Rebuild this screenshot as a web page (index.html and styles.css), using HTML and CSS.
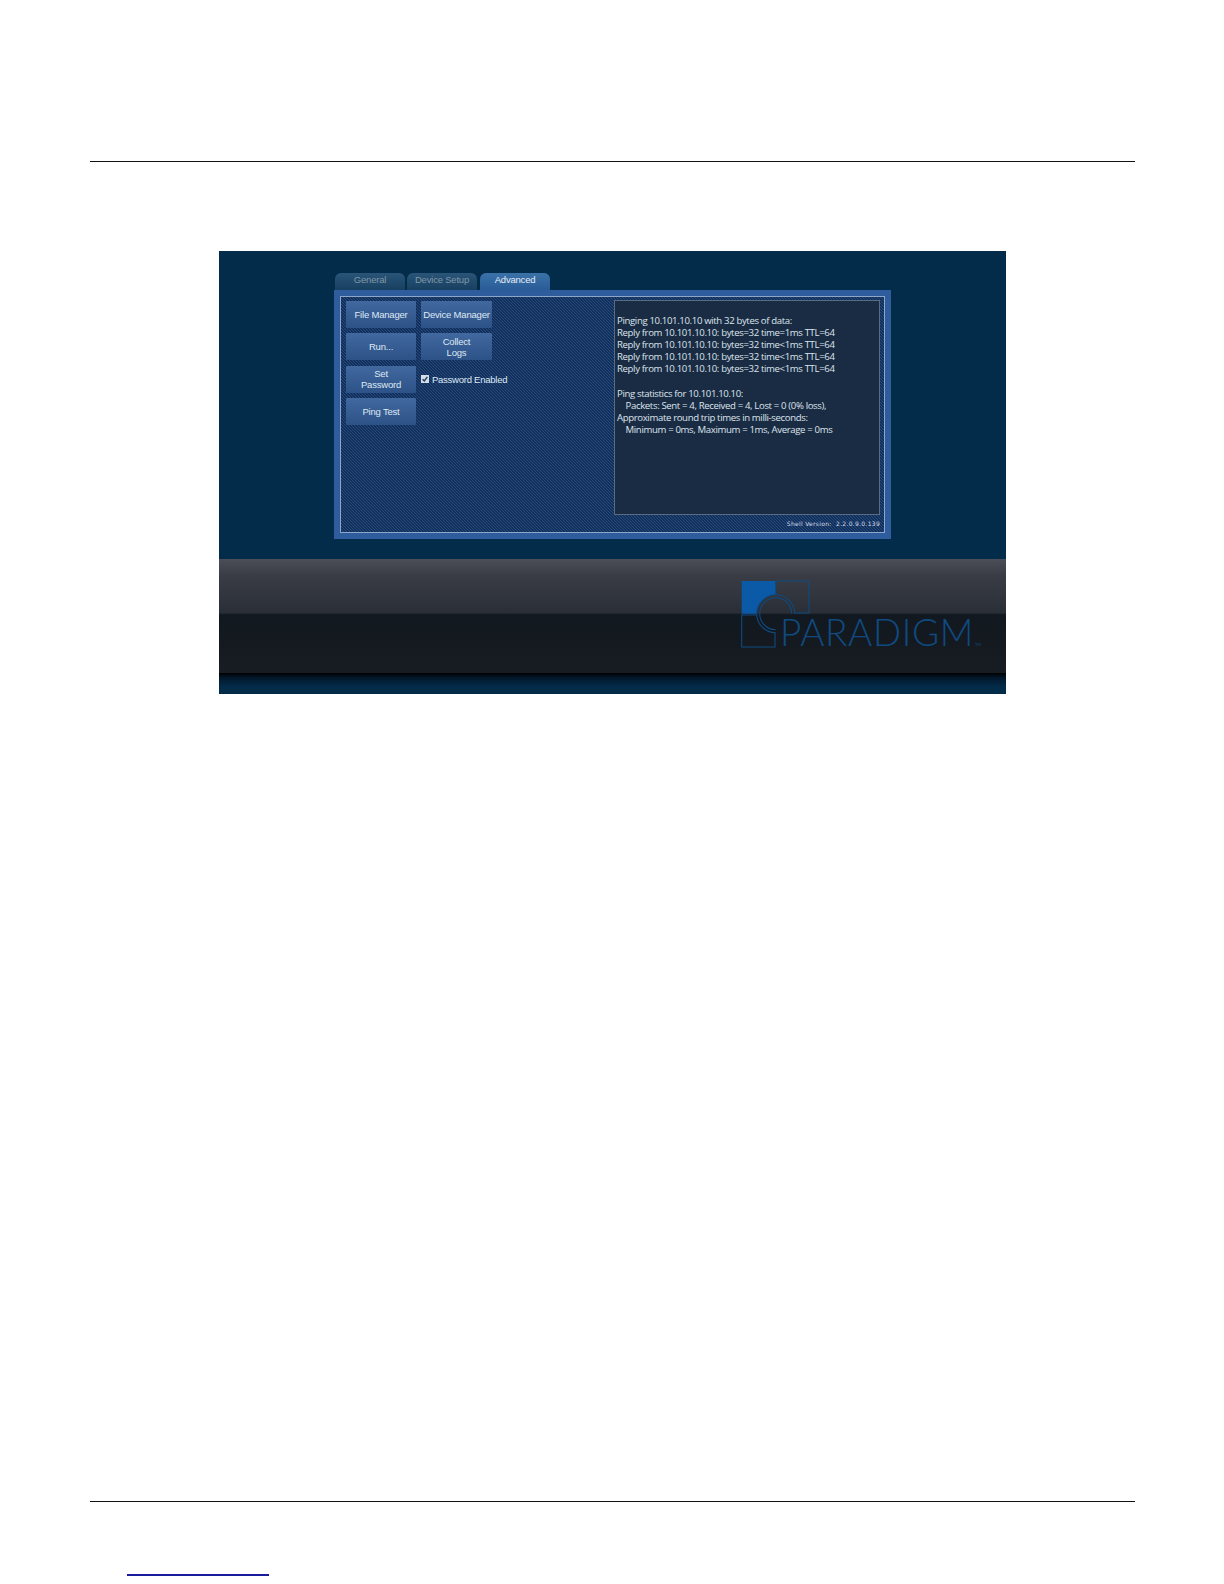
FILE: index.html
```html
<!DOCTYPE html>
<html lang="en">
<head>
    <meta charset="UTF-8">
    <title>Advanced</title>
    <link rel="stylesheet" href="styles.css">
</head>
<body>

    <div class="page">
        <hr class="rule top-rule">

        <div class="screen">
            <div class="shell">
                <div class="tabs">
                    <div class="tab">General</div>
                    <div class="tab">Device Setup</div>
                    <div class="tab active">Advanced</div>
                </div>

                <div class="panel">
                    <div class="panel-inner">
                        <div class="actions">
                            <button class="btn">File Manager</button>
                            <button class="btn">Device Manager</button>
                            <button class="btn">Run...</button>
                            <button class="btn">Collect<br>Logs</button>
                            <button class="btn">Set<br>Password</button>
                            <label class="check">
                                <svg class="check-box" viewBox="0 0 8 8" width="8" height="8">
                                    <rect width="8" height="8" fill="#d5dde8"/>
                                    <path d="M1.6 4.2 3.3 6 6.4 1.8" fill="none" stroke="#1b3558" stroke-width="1.3"/>
                                </svg>
                                Password Enabled
                            </label>
                            <button class="btn">Ping Test</button>
                        </div>

                        <div class="output">
                            <pre class="console">Pinging 10.101.10.10 with 32 bytes of data:
Reply from 10.101.10.10: bytes=32 time=1ms TTL=64
Reply from 10.101.10.10: bytes=32 time&lt;1ms TTL=64
Reply from 10.101.10.10: bytes=32 time&lt;1ms TTL=64
Reply from 10.101.10.10: bytes=32 time&lt;1ms TTL=64

Ping statistics for 10.101.10.10:
    Packets: Sent = 4, Received = 4, Lost = 0 (0% loss),
Approximate round trip times in milli-seconds:
    Minimum = 0ms, Maximum = 1ms, Average = 0ms</pre>
                            <div class="version">Shell Version:&nbsp; 2.2.0.9.0.139</div>
                        </div>
                    </div>
                </div>
            </div>

            <div class="bar">
                <svg class="logo" viewBox="0 0 250 90" width="250" height="90">
                    <path class="logo-fill" d="M1.7 5H35.7V18.7A19 19 0 0 0 16.7 37.7H1.7Z"/>
                    <path class="logo-line" d="M35.7 18.7V5H69V37H54.7"/>
                    <path class="logo-line" d="M16.7 39H1.7V71H35V56.7"/>
                    <path class="logo-line" d="M35.7 56.7A19 19 0 1 1 54.7 37.7"/>
                    <path class="logo-line" d="M35.7 53.7A16 16 0 1 1 51.7 37.7"/>
                    <text class="logo-text" x="40" y="70">PARADIGM</text>
                    <text class="logo-tm" x="235" y="70">TM</text>
                </svg>
            </div>
            <div class="strip"></div>
        </div>

        <hr class="rule bottom-rule">
    </div>

    <a class="link-line" href="#"></a>

</body>
</html>
```

FILE: styles.css
```css
* {
    box-sizing: border-box;
}

html, body {
    margin: 0;
    background: #fff;
}

body {
    height: 1584px;
    overflow: hidden;
    font-family: "Liberation Sans", Arial, sans-serif;
}

.page {
    padding: 161px 89px 0 90px;
}

.rule {
    height: 1px;
    margin: 0;
    border: 0;
    background: #111;
}

.screen {
    width: 787px;
    height: 443px;
    margin: 89px 0 0 129px;
    display: flex;
    flex-direction: column;
    background: #032c4a;
}

.bottom-rule {
    margin-top: 807px;
}

.link-line {
    display: block;
    width: 142px;
    height: 2px;
    margin: 72px 0 0 127px;
    background: #1a1a9c;
}

/* tabs + panel */
.shell {
    height: 308px;
    padding: 22px 0 0 115px;
}

.tabs {
    display: flex;
    height: 17px;
    padding-left: 1px;
    gap: 2px;
}

.tab {
    width: 70px;
    border-radius: 6px 6px 0 0;
    background: linear-gradient(#2a5578, #173f60);
    color: #7f97a8;
    font-size: 9.5px;
    letter-spacing: -0.2px;
    line-height: 14px;
    text-align: center;
}

.tab.active {
    margin-left: 1px;
    background: linear-gradient(#3a72a8, #2a5c98);
    color: #e6eef6;
}

.panel {
    width: 557px;
    height: 249px;
    padding: 6px;
    background: #2f5c9c;
}

.panel-inner {
    display: flex;
    height: 237px;
    padding: 3px 0 0 5px;
    border: 1px solid #8ea6c8;
    background: linear-gradient(45deg, #12305c 25%, #27497c 25%, #27497c 50%, #12305c 50%, #12305c 75%, #27497c 75%);
    background-size: 3px 3px;
}

.actions {
    display: grid;
    grid-template-columns: 70px 71px;
    grid-auto-rows: 27px;
    gap: 5.3px 5px;
    width: 268px;
    margin-top: 1px;
}

.btn {
    padding: 0;
    border: 0;
    border-radius: 1px;
    background: linear-gradient(#42699f, #2c5288);
    color: #dfe8f2;
    font-family: inherit;
    font-size: 9.5px;
    letter-spacing: -0.2px;
    line-height: 11px;
    white-space: nowrap;
}

.check {
    display: flex;
    align-items: center;
    gap: 3px;
    color: #dfe8f2;
    font-size: 9.5px;
    letter-spacing: -0.25px;
    white-space: nowrap;
}

.check-box {
    flex: none;
}

.output {
    width: 266px;
}

.console {
    height: 215px;
    margin: 0;
    padding: 14px 2px 0;
    border: 1px solid #5a6c84;
    background: #1a2c44;
    color: #dde4ec;
    font-family: "Open Sans", "Liberation Sans", sans-serif;
    font-size: 9.6px;
    letter-spacing: -0.36px;
    line-height: 12.1px;
    white-space: pre-wrap;
}

.version {
    margin-top: 5px;
    color: #d5dde6;
    font-family: "DejaVu Sans", sans-serif;
    font-size: 6px;
    letter-spacing: 0.3px;
    text-align: right;
}

/* bottom bar */
.bar {
    height: 114px;
    padding: 17px 0 0 521px;
    background: linear-gradient(#4b4e56 0, #393c44 15%, #2a2f37 47%, #12181f 49%, #181c23 100%);
}

.logo {
    display: block;
}

.logo-fill {
    fill: #0a5aa8;
}

.logo-line {
    fill: none;
    stroke: #0f4a80;
    stroke-width: 1.1;
}

.logo-text {
    fill: #0f4a80;
    font-family: Lato, "Open Sans", sans-serif;
    font-size: 37px;
    font-weight: 300;
    letter-spacing: 0.6px;
}

.logo-tm {
    fill: #0f4a80;
    font-family: Lato, sans-serif;
    font-size: 4px;
}

.strip {
    flex: 1;
    background: linear-gradient(#000 0, #02182c 5px, #032c4a 14px);
}
```
